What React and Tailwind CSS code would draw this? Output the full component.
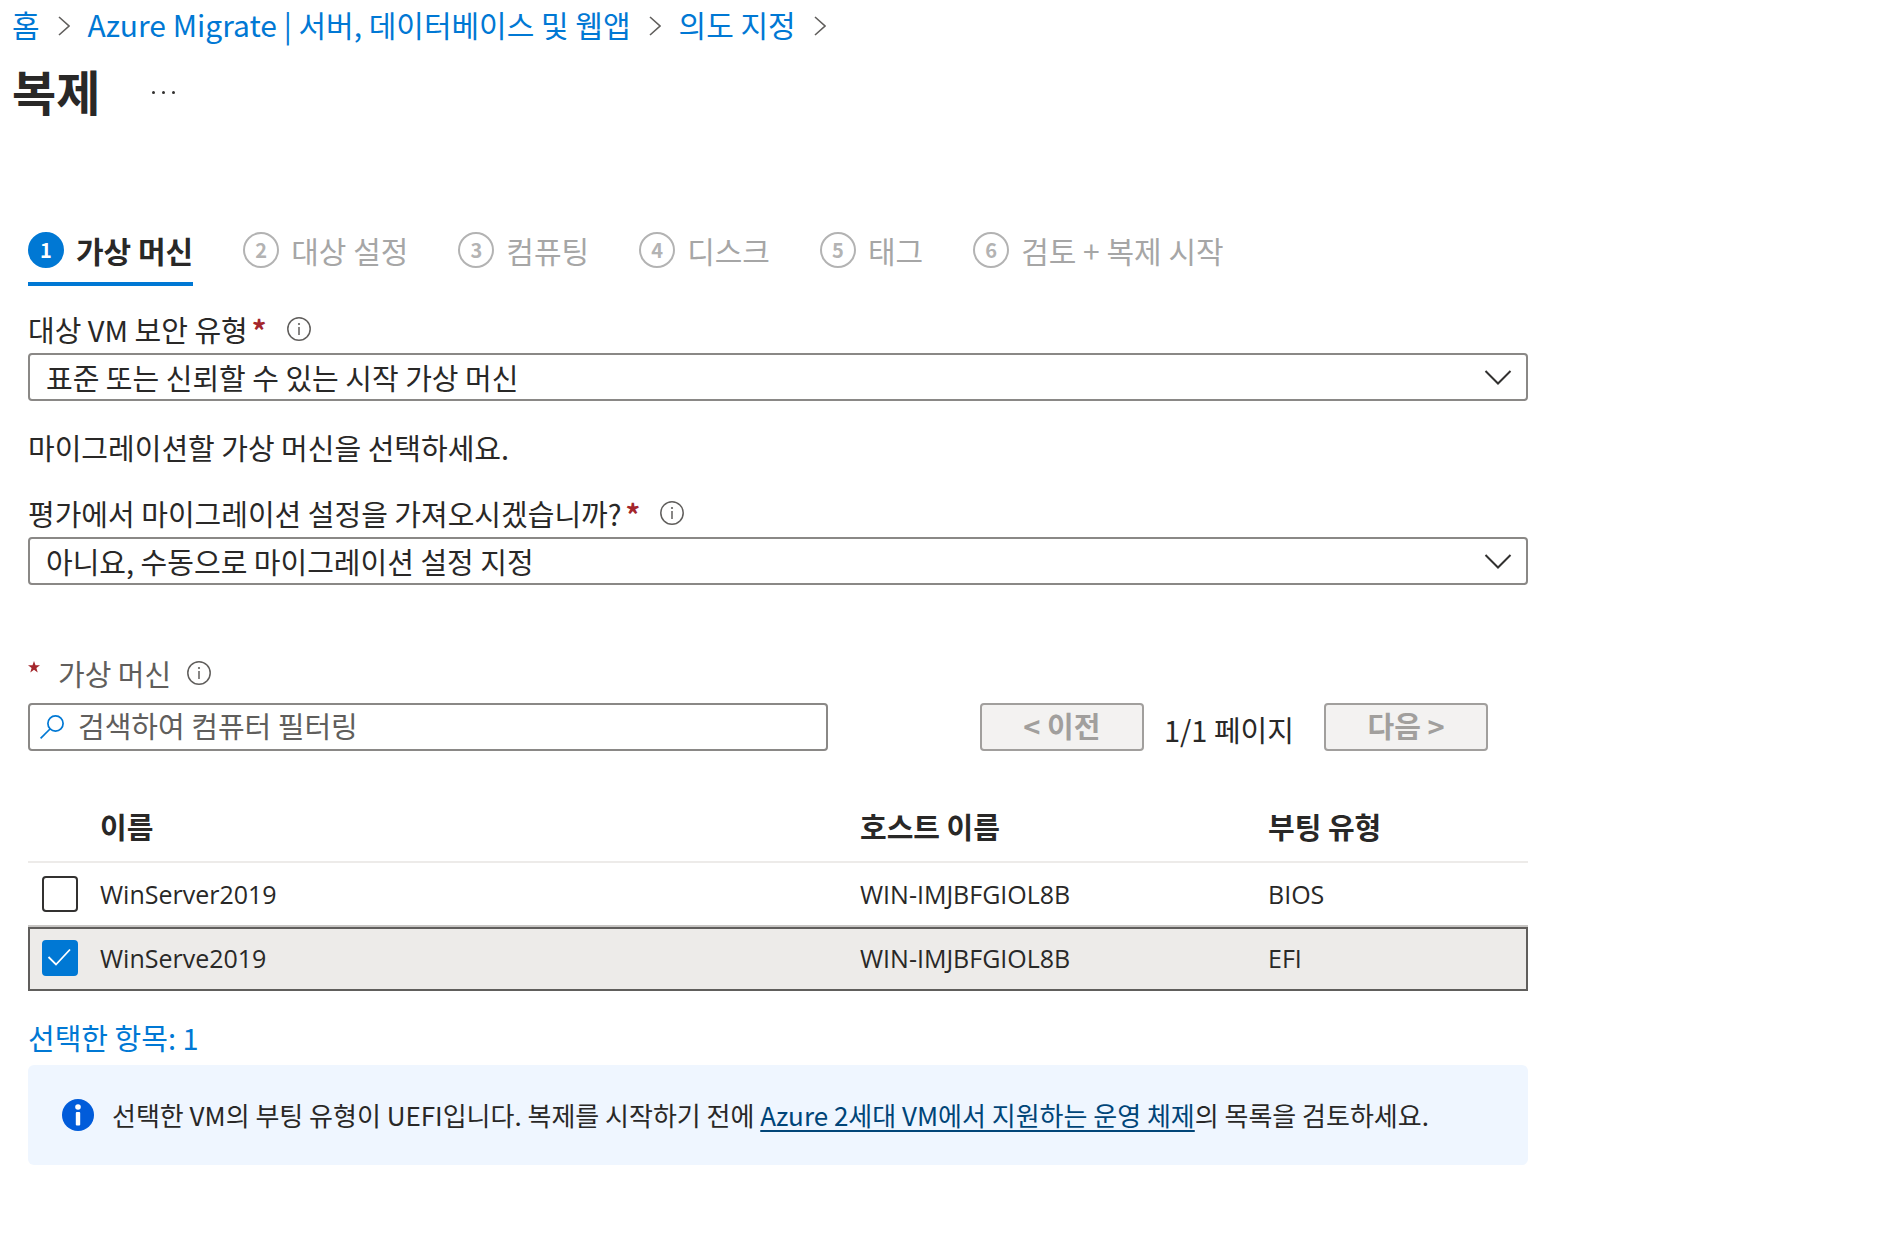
import { useState } from 'react';

const STEPS = ['가상 머신', '대상 설정', '컴퓨팅', '디스크', '태그', '검토 + 복제 시작'];

const MACHINES = [
  { id: 'vm-1', name: 'WinServer2019', host: 'WIN-IMJBFGIOL8B', boot: 'BIOS' },
  { id: 'vm-2', name: 'WinServe2019', host: 'WIN-IMJBFGIOL8B', boot: 'EFI' },
];

const CRUMBS = ['홈', 'Azure Migrate | 서버, 데이터베이스 및 웹앱', '의도 지정'];

function CrumbArrow() {
  return (
    <svg className="mt-1 h-5 w-3 shrink-0" viewBox="0 0 12 20" fill="none" stroke="#605e5c" strokeWidth="1.6" aria-hidden="true">
      <path d="M1 1l10 9-10 9" />
    </svg>
  );
}

function InfoIcon() {
  return (
    <svg className="h-6 w-6 shrink-0" viewBox="0 0 24 24" fill="none" aria-hidden="true">
      <circle cx="12" cy="12" r="11.2" stroke="#605e5c" strokeWidth="1.5" />
      <path d="M12 10v8" stroke="#605e5c" strokeWidth="1.5" />
      <circle cx="12" cy="7" r="1.1" fill="#605e5c" />
    </svg>
  );
}

function SelectField({ id, label, value }) {
  return (
    <div>
      <div className="flex h-12 items-center">
        <label htmlFor={id} className="flex items-center gap-1">
          {label}
          <span className="font-bold text-[#a4262c]">*</span>
        </label>
        <span className="ml-5">
          <InfoIcon />
        </span>
      </div>
      <div className="relative">
        <select
          id={id}
          className="h-12 w-full appearance-none rounded border-2 border-[#8a8886] bg-white pr-16 pl-4 text-[#292827]"
        >
          <option>{value}</option>
        </select>
        <svg
          className="pointer-events-none absolute top-4 right-4 h-4 w-7"
          viewBox="0 0 28 16"
          fill="none"
          stroke="#323130"
          strokeWidth="2"
          aria-hidden="true"
        >
          <path d="M1.5 2L14 14.5 26.5 2" />
        </svg>
      </div>
    </div>
  );
}

function PageButton({ children }) {
  return (
    <button
      type="button"
      disabled
      className="h-12 w-[164px] rounded border-2 border-[#a19f9d] bg-[#f3f2f1] pb-1 font-bold text-[#a19f9d]"
    >
      {children}
    </button>
  );
}

function MachineRow({ machine, checked, onToggle }) {
  const cell = `border-b-2 ${checked ? 'border-[#605e5c]' : 'border-[#c8c6c4]'}`;

  return (
    <tr className={`h-16 ${checked ? 'bg-[#edebe9] outline-2 -outline-offset-2 outline-[#605e5c]' : ''}`}>
      <td className={`pl-3.5 ${cell}`}>
        <div className="relative h-9 w-9">
          <input
            id={machine.id}
            type="checkbox"
            checked={checked}
            onChange={onToggle}
            className="block h-9 w-9 appearance-none rounded border-2 border-[#323130] bg-white checked:border-[#0078d4] checked:bg-[#0078d4]"
          />
          {checked && (
            <svg
              className="pointer-events-none absolute inset-0 h-9 w-9"
              viewBox="0 0 36 36"
              fill="none"
              stroke="#fff"
              strokeWidth="1.8"
              aria-hidden="true"
            >
              <path d="M6.5 17L14 24.5 28 9.5" />
            </svg>
          )}
        </div>
      </td>
      <td className={cell}>
        <label htmlFor={machine.id}>{machine.name}</label>
      </td>
      <td className={cell}>{machine.host}</td>
      <td className={cell}>{machine.boot}</td>
    </tr>
  );
}

export default function App() {
  const [selected, setSelected] = useState(['vm-2']);

  const toggle = (id) => {
    setSelected((prev) => (prev.includes(id) ? prev.filter((x) => x !== id) : [...prev, id]));
  };

  return (
    <div className="min-h-screen bg-white font-['Noto_Sans_CJK_KR',sans-serif] text-[29px] leading-9 text-[#292827]">
      {/* Breadcrumb and title */}
      <header className="px-3 pt-1.5 pb-0.5">
        <nav className="flex items-center gap-[18px] text-[30px]">
          {CRUMBS.map((crumb) => (
            <div key={crumb} className="flex items-center gap-[18px]">
              <a href="#" className="text-[#0078d4]">
                {crumb}
              </a>
              <CrumbArrow />
            </div>
          ))}
        </nav>
        <div className="mt-4 flex items-center gap-13">
          <h1 className="text-[48px] leading-16 font-bold">복제</h1>
          <button type="button" aria-label="더 보기" className="mt-1 flex gap-[7px]">
            <span className="h-[3px] w-[3px] rounded-full bg-[#323130]" />
            <span className="h-[3px] w-[3px] rounded-full bg-[#323130]" />
            <span className="h-[3px] w-[3px] rounded-full bg-[#323130]" />
          </button>
        </div>
      </header>

      <main className="mt-24 w-full max-w-[1556px] px-7">
        {/* Wizard steps */}
        <nav className="flex gap-[50px] text-[30px]">
          {STEPS.map((step, i) => (
            <button
              key={step}
              type="button"
              className={`flex h-[66px] items-center gap-3 border-b-4 pb-0.5 ${i === 0 ? 'border-[#0078d4] font-bold' : 'border-transparent text-[#a6a6a6]'}`}
            >
              <span
                className={`flex h-9 w-9 items-center justify-center rounded-full border-2 text-[20px] font-bold ${i === 0 ? 'border-[#0078d4] bg-[#0078d4] text-white' : 'border-[#b3b3b3] text-[#b3b3b3]'}`}
              >
                {i + 1}
              </span>
              {step}
            </button>
          ))}
        </nav>

        <div className="mt-[19px]">
          <SelectField id="security-type" label="대상 VM 보안 유형" value="표준 또는 신뢰할 수 있는 시작 가상 머신" />
        </div>
        <p className="mt-7">마이그레이션할 가상 머신을 선택하세요.</p>
        <div className="mt-6">
          <SelectField
            id="import-settings"
            label="평가에서 마이그레이션 설정을 가져오시겠습니까?"
            value="아니요, 수동으로 마이그레이션 설정 지정"
          />
        </div>

        {/* Filter and paging */}
        <div className="mt-16 flex h-12 items-center text-[#605e5c]">
          <svg className="mb-3 h-3 w-3" viewBox="0 0 12 12" fill="#a4262c" aria-hidden="true">
            <path d="M6 0l1.5 4.2H12L8.4 6.9 9.7 11.5 6 8.7 2.3 11.5 3.6 6.9 0 4.2h4.5z" />
          </svg>
          <label htmlFor="vm-filter" className="mr-4 ml-[18px]">
            가상 머신
          </label>
          <InfoIcon />
        </div>
        <div className="mt-1.5 flex items-center justify-between pr-10">
          <div className="relative w-full max-w-[800px]">
            <svg
              className="pointer-events-none absolute top-3 left-3 h-6 w-6"
              viewBox="0 0 24 24"
              fill="none"
              stroke="#0078d4"
              strokeWidth="1.7"
              aria-hidden="true"
            >
              <circle cx="15.5" cy="8.5" r="7.6" />
              <path d="M10 14L.6 23.4" />
            </svg>
            <input
              id="vm-filter"
              type="text"
              placeholder="검색하여 컴퓨터 필터링"
              className="block h-12 w-full rounded border-2 border-[#8a8886] pr-3 pb-1 pl-12 placeholder:text-[#605e5c]"
            />
          </div>
          <div className="flex gap-5">
            <PageButton>&lt; 이전</PageButton>
            <span className="mr-2.5 pt-2">1/1 페이지</span>
            <PageButton>다음 &gt;</PageButton>
          </div>
        </div>

        <table className="mt-10 w-full table-fixed border-separate border-spacing-0 text-left">
          <colgroup>
            <col className="w-[72px]" />
            <col className="w-[760px]" />
            <col className="w-[408px]" />
            <col />
          </colgroup>
          <thead>
            <tr className="h-[72px]">
              <th className="border-b-2 border-[#edebe9]" />
              <th className="border-b-2 border-[#edebe9] font-bold">이름</th>
              <th className="border-b-2 border-[#edebe9] font-bold">호스트 이름</th>
              <th className="border-b-2 border-[#edebe9] font-bold">부팅 유형</th>
            </tr>
          </thead>
          <tbody className="font-['Open_Sans',sans-serif] text-[25px]">
            {MACHINES.map((machine) => (
              <MachineRow
                key={machine.id}
                machine={machine}
                checked={selected.includes(machine.id)}
                onToggle={() => toggle(machine.id)}
              />
            ))}
          </tbody>
        </table>

        <a href="#" className="mt-7 block w-fit text-[#0078d4]">
          선택한 항목: {selected.length}
        </a>

        <div className="mt-2.5 flex min-h-[100px] items-center gap-4 rounded-md bg-[#eff6ff] px-8 text-[26px]">
          <svg className="h-9 w-9 shrink-0" viewBox="0 0 36 36" aria-hidden="true">
            <circle cx="18" cy="18" r="16" fill="#015cda" />
            <circle cx="18" cy="10" r="2.8" fill="#fff" />
            <rect x="15.8" y="15" width="4.4" height="13.5" rx="1" fill="#fff" />
          </svg>
          <p>
            선택한 VM의 부팅 유형이 UEFI입니다. 복제를 시작하기 전에{' '}
            <a href="#" className="text-[#004578] underline decoration-2 underline-offset-4">
              Azure 2세대 VM에서 지원하는 운영 체제
            </a>
            의 목록을 검토하세요.
          </p>
        </div>
      </main>
    </div>
  );
}
